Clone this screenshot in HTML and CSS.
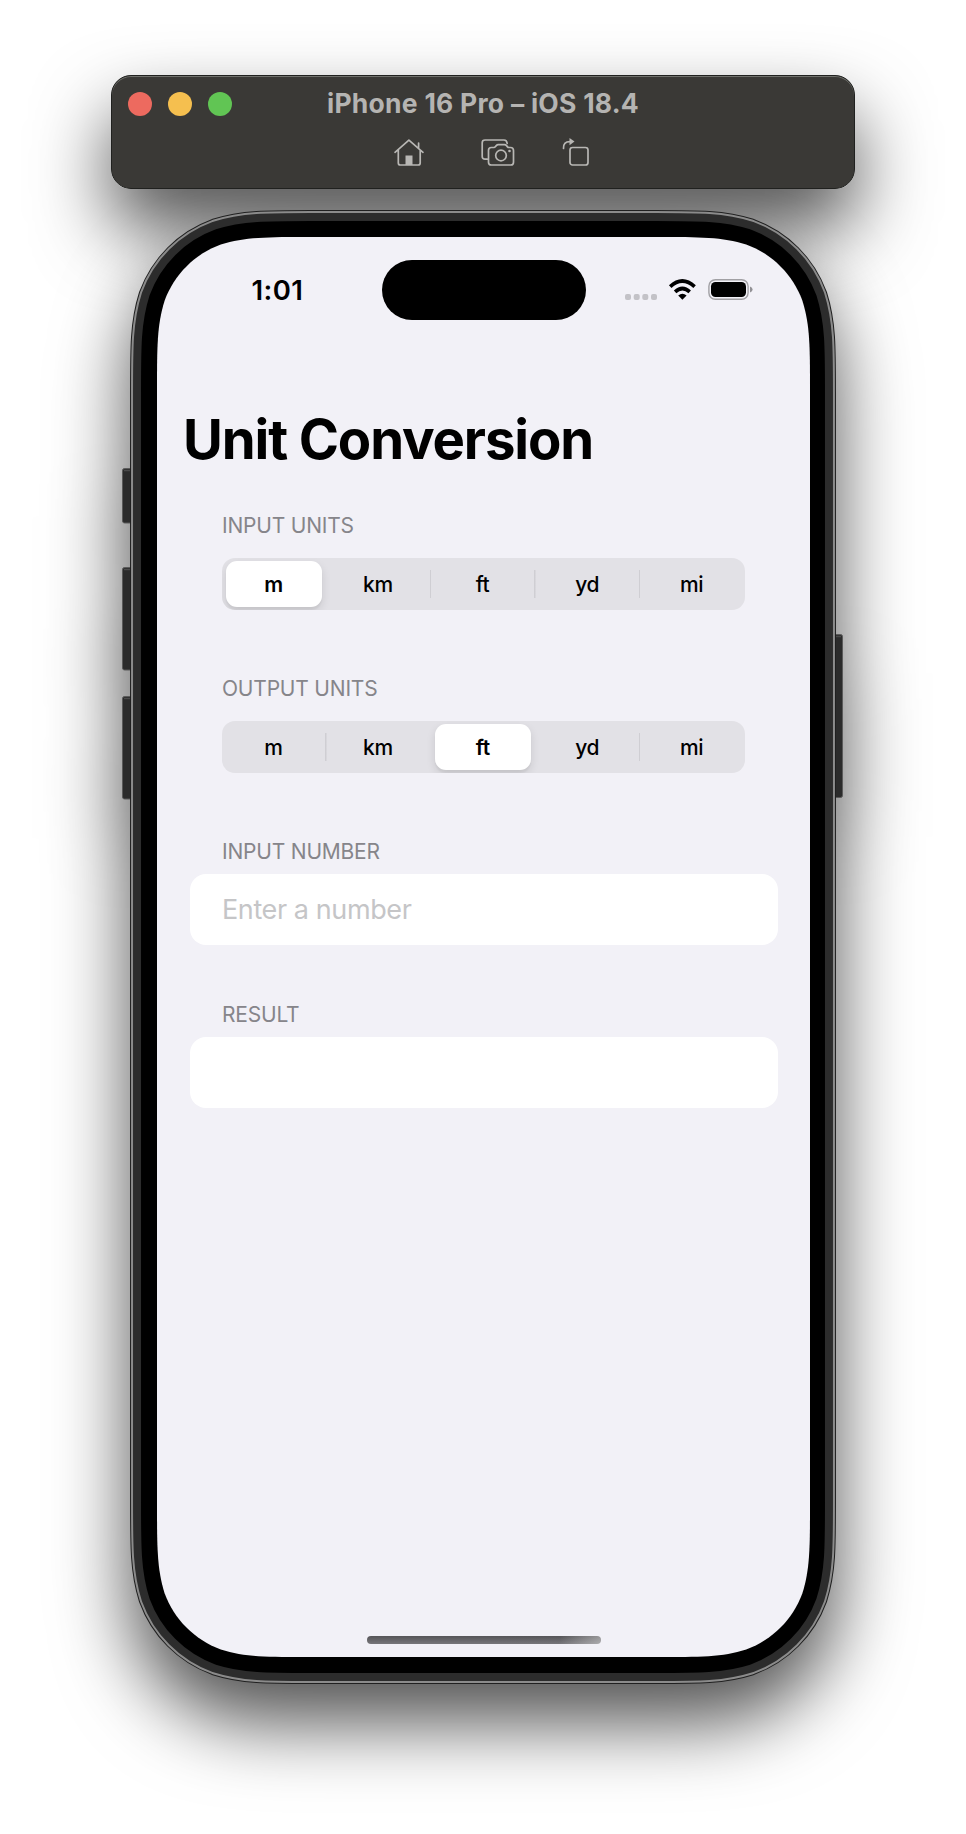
FILE: index.html
```html
<!DOCTYPE html>
<html lang="en">
<head>
<meta charset="utf-8">
<title>Unit Conversion</title>
<link rel="stylesheet" href="styles.css">
</head>
<body>
<header class="window-bar">
  <div class="title-row">
    <div class="lights"><span class="light close"></span><span class="light minimize"></span><span class="light expand"></span></div>
    <div class="window-title">iPhone 16 Pro – iOS 18.4</div>
  </div>
  <div class="tools">
    <svg class="tool" width="32" height="30" viewBox="0 0 32 30"><path d="M2 14.3 15.9 2.2 30 14.3M5.3 12V25q0 2 2 2H25.200q2 0 2-2V12M25.600 9.500V5"/><path class="solid" d="M12.500 17.500h7V27h-7z"/></svg>
    <svg class="tool" width="34" height="30" viewBox="0 0 34 30"><path d="M6 21.200H4Q1.200 21.200 1.200 18.400V4.800Q1.200 2 4 2H23Q25.800 2 26.200 5.500M10.300 9.500h2.500q1 0 1.700-.9l.8-1q.8-1 2-1h6.200q1.200 0 2 1l.8 1q.7.9 1.700.9h1.500q3 0 3 3V24.200q0 2.800-2.800 2.800H10.300q-2.800 0-2.800-2.800V12.300q0-2.800 2.800-2.800Z"/><circle cx="20" cy="17.500" r="5.300"/><circle class="solid" cx="28.500" cy="13" r="1.300"/></svg>
    <svg class="tool" width="28" height="30" viewBox="0 0 28 30"><path d="M1.500 10.500Q1 3.600 8 3.600"/><path class="solid" d="M7.500 0l5 3.600-5 3.600z"/><rect x="8" y="9.500" width="18" height="17.500" rx="2.500"/></svg>
  </div>
</header>
<main class="device">
  <svg class="shell" width="724" height="1474" viewBox="121 210 724 1474">
    <defs>
      <path id="outline" d="M311.400 237H655.600C700.100 237 722.300 237 746.200 244.600C772.300 254.100 792.900 274.700 802.400 300.800C810 324.700 810 346.900 810 391.400V1502.600C810 1547.100 810 1569.300 802.400 1593.200C792.900 1619.300 772.300 1639.900 746.200 1649.400C722.300 1657 700.100 1657 655.600 1657H311.400C266.900 1657 244.700 1657 220.800 1649.400C194.700 1639.900 174.100 1619.300 164.600 1593.200C157 1569.300 157 1547.100 157 1502.600V391.400C157 346.900 157 324.700 164.600 300.800C174.100 274.700 194.700 254.100 220.800 244.600C244.700 237 266.900 237 311.400 237Z"/>
    </defs>
    <g class="side-buttons">
      <rect x="122.500" y="468.500" width="14" height="54.500" rx="2"/>
      <rect x="122.500" y="567.500" width="14" height="102.500" rx="2"/>
      <rect x="122.500" y="696.500" width="14" height="102.500" rx="2"/>
      <rect x="828.500" y="634.500" width="14" height="163" rx="2"/>
    </g>
    <g class="button-tops">
      <path d="M124 470.500h7M124 569.500h7M124 698.500h7M836 636.500h5"/>
    </g>
    <g transform="translate(.24 0) scale(.99847 1)">
      <use href="#outline" class="edge"/>
      <use href="#outline" class="rim"/>
      <use href="#outline" class="metal"/>
      <use href="#outline" class="bezel"/>
    </g>
    <use href="#outline" class="glass"/>
  </svg>
  <div class="screen">
    <div class="status">
      <div class="time">1:01</div>
      <div class="island"></div>
      <svg class="signals" width="130" height="24" viewBox="624 278 130 24">
        <g fill="#c3c2c7"><rect x="625" y="294" width="6" height="6" rx="2"/><rect x="633.700" y="294" width="6" height="6" rx="2"/><rect x="642.300" y="294" width="6" height="6" rx="2"/><rect x="651" y="294" width="6" height="6" rx="2"/></g>
        <g fill="none" stroke="#000" stroke-width="3.700"><path d="M670.200 286.600Q682.300 275.500 694.600 286.600"/><path d="M675.100 291.800Q682.400 285.300 689.700 291.800"/></g>
        <path d="M678.200 295.400Q682.400 291.900 686.600 295.400L682.400 299.700Z"/>
        <rect x="708.900" y="279.700" width="39.200" height="19.600" rx="6.500" fill="none" stroke="#a1a0a4" stroke-width="1.400"/>
        <rect x="711" y="282" width="35" height="15" rx="4.500"/>
        <path d="M750 286.500Q752.600 287.500 752.600 289.500T750 292.500Z" fill="#929195"/>
      </svg>
    </div>
    <h1 class="heading">Unit Conversion</h1>
    <section class="group">
      <h2 class="label">INPUT UNITS</h2>
      <div class="segments">
        <span class="segment selected">m</span><span class="segment ruled">km</span><span class="segment ruled">ft</span><span class="segment ruled">yd</span><span class="segment">mi</span>
      </div>
    </section>
    <section class="group">
      <h2 class="label">OUTPUT UNITS</h2>
      <div class="segments">
        <span class="segment ruled">m</span><span class="segment">km</span><span class="segment selected">ft</span><span class="segment ruled">yd</span><span class="segment">mi</span>
      </div>
    </section>
    <section class="group">
      <h2 class="label">INPUT NUMBER</h2>
      <div class="field">Enter a number</div>
    </section>
    <section class="group">
      <h2 class="label">RESULT</h2>
      <div class="field"></div>
    </section>
    <div class="home-bar"></div>
  </div>
</main>
</body>
</html>
```
FILE: styles.css
```css
* { box-sizing: border-box; }
body {
  margin: 0;
  height: 1834px;
  padding-top: 75px;
  overflow: hidden;
  background: #fff;
  font-family: Inter, "Liberation Sans", sans-serif;
  color: #000;
}
.window-bar {
  position: relative;
  width: 744px;
  height: 114px;
  margin: 0 0 21px 111px;
  padding: 1px;
  border-radius: 20px;
  box-shadow: 0 39px 76px rgba(0, 0, 0, .68);
}
.window-bar::before {
  content: "";
  position: absolute;
  z-index: 1;
  inset: 0;
  border: 1px solid #20211f;
  border-radius: 20px;
  background: #3a3936;
  box-shadow: inset 0 1px 0 #70716c;
}
.title-row, .tools { position: relative; z-index: 2; }
.title-row {
  display: grid;
  grid-template-columns: 200px 1fr 200px;
  align-items: center;
  height: 56px;
}
.lights { display: flex; gap: 16px; padding-left: 16px; }
.light { width: 24px; height: 24px; border-radius: 50%; }
.close { background: #ed6a5f; }
.minimize { background: #f5bf4f; }
.expand { background: #61c554; }
.window-title {
  color: #b5b4b2;
  font-size: 26.5px;
  font-weight: 700;
  line-height: 32px;
  letter-spacing: .25px;
  text-align: center;
  white-space: nowrap;
  padding-bottom: 3px;
}
.tools { display: flex; padding-left: 281px; }
.tool { fill: none; stroke: #b8b7b4; stroke-width: 1.700; stroke-linecap: round; stroke-linejoin: round; margin-top: 6px; }
.tool + .tool { margin-left: 56px; }
.tool + .tool + .tool { margin-left: 47px; }
.tool .solid { fill: #b8b7b4; stroke: none; }
.device {
  display: grid;
  width: 706px;
  height: 1474px;
  margin-left: 130px;
}
.shell, .screen { grid-area: 1 / 1; }
.shell { margin-left: -9px; filter: drop-shadow(0 39px 38px rgba(0, 0, 0, .68)); }
.side-buttons { fill: #2b2b2b; stroke: #5a5a5a; stroke-width: 1; }
.button-tops { stroke: #4a4a4a; stroke-width: 1.500; }
.edge, .rim, .metal, .bezel { fill: none; }
.edge { stroke: #202020; stroke-width: 54px; }
.rim { stroke: #8b8b8b; stroke-width: 52px; }
.metal { stroke: #2c2c2c; stroke-width: 48px; }
.bezel { stroke: #000; stroke-width: 32px; }
.glass { fill: #f2f1f7; }
.screen {
  position: relative;
  display: flex;
  flex-direction: column;
  width: 653px;
  height: 1420px;
  margin: 27px;
  padding: 23px 33px 13px;
}
.status {
  display: grid;
  grid-template-columns: 191.5px 204.5px 1fr;
  align-items: center;
  height: 60px;
}
.time { padding-left: 61.5px; font-size: 27.5px; font-weight: 600; line-height: 32px; letter-spacing: .4px; }
.island { height: 60px; border-radius: 30px; background: #000; }
.signals { margin-left: 38px; }
.heading {
  margin: 84px 0 38.500px -7px;
  font-size: 54.5px;
  font-weight: 700;
  line-height: 70px;
  letter-spacing: -1.150px;
  white-space: nowrap;
}
.group { height: 163px; }
.label {
  margin: 0 0 10px 32px;
  color: #86858a;
  font-size: 21px;
  font-weight: 400;
  line-height: 25px;
  letter-spacing: -.2px;
}
.segments {
  display: grid;
  grid-template-columns: repeat(5, 1fr);
  height: 52px;
  margin: 20.5px 32px 0;
  overflow: hidden;
  border-radius: 13px;
  background: #e2e1e6;
}
.segment {
  display: flex;
  align-items: center;
  justify-content: center;
  padding-right: 2px;
  font-size: 21px;
  font-weight: 500;
  letter-spacing: -.4px;
}
.ruled { background: linear-gradient(#cfced3, #cfced3) 100% 50% / 1.500px 28px no-repeat; }
.selected {
  margin: 3px 5px 3px 3.5px;
  padding: 0;
  border-radius: 11px;
  background: #fff;
  font-weight: 600;
  box-shadow: 0 4px 10px rgba(0, 0, 0, .11), 0 3px 2px rgba(0, 0, 0, .04);
}
.field {
  display: flex;
  align-items: center;
  height: 71px;
  margin: 0 -.5px;
  padding: 0 32.5px;
  border-radius: 16px;
  background: #fff;
  color: #c5c5c7;
  font-size: 27px;
  letter-spacing: -.4px;
}
.home-bar {
  width: 234px;
  height: 8px;
  margin: auto auto 0 176.5px;
  border-radius: 4px;
  background: linear-gradient(105deg, transparent 82%, rgba(255, 255, 255, .4)), linear-gradient(#565558, #77767a);
}
```
